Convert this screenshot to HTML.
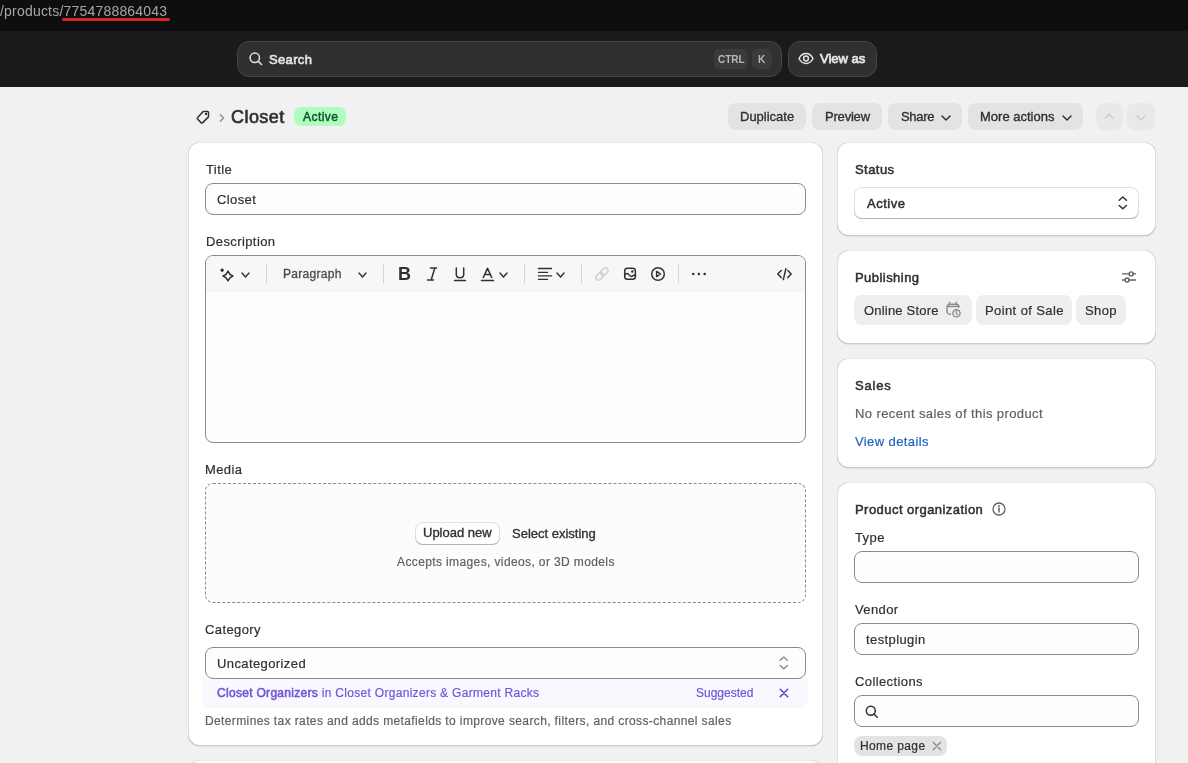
<!DOCTYPE html>
<html><head><meta charset="utf-8"><style>
*{box-sizing:border-box;margin:0;padding:0}
html,body{width:1188px;height:763px;overflow:hidden}
body{position:relative;background:#f1f1f1;font-family:"Liberation Sans",sans-serif;color:#303030;font-size:13px}
.a{position:absolute;white-space:nowrap}
svg{position:absolute;overflow:visible}
.r13{font-size:13px;line-height:16px;letter-spacing:.4px;-webkit-text-stroke:.2px currentColor}
.m13{font-size:13px;line-height:16px;-webkit-text-stroke:.35px currentColor}
.b13{font-size:13px;line-height:16px;font-weight:bold}
.r12{font-size:12px;line-height:16px;letter-spacing:.38px;-webkit-text-stroke:.2px currentColor}
.m12{font-size:12px;line-height:16px;-webkit-text-stroke:.3px currentColor;letter-spacing:.38px}
.b12{font-size:12px;line-height:16px;font-weight:bold}
.r14{font-size:14px;line-height:16px}
.b18{font-size:18px;line-height:20px;font-weight:bold}
.s13{font-size:13px;line-height:16px;-webkit-text-stroke:.5px currentColor;letter-spacing:.45px}
.s12{font-size:12px;line-height:16px;-webkit-text-stroke:.5px currentColor;letter-spacing:.45px}
.s18{font-size:18px;line-height:20px;-webkit-text-stroke:.65px currentColor;letter-spacing:.45px}
.b10{font-size:10px;line-height:16px;font-weight:bold}
.card{position:absolute;background:#fff;border-radius:12px;box-shadow:0 1px 1px 0 rgba(26,26,26,.08), inset 1px 0 0 0 rgba(0,0,0,.13), inset -1px 0 0 0 rgba(0,0,0,.13), inset 0 -1px 0 0 rgba(0,0,0,.2), inset 0 1px 0 0 rgba(0,0,0,.09)}
.inp{position:absolute;background:#fdfdfd;border:1px solid #8a8a8a;border-radius:8px}
.btn{position:absolute;background:#e3e3e3;border-radius:8px}
.chip{position:absolute;background:#eeeeee;border-radius:8px}
</style></head><body><div id="root" style="position:absolute;left:0;top:0;width:1188px;height:763px;overflow:hidden;will-change:transform">
<div class="a" style="left:0px;top:0px;width:1188px;height:31px;background:#0e0e10"></div>
<div class="a r14" style="left:0px;top:3px;color:#a6a6a6;letter-spacing:.2px">/products/7754788864043</div>
<div class="a" style="left:62px;top:18px;width:108px;height:3px;background:#d62424;border-radius:2px"></div>
<div class="a" style="left:0px;top:31px;width:1188px;height:56px;background:#1a1a1a"></div>
<div class="a" style="left:237px;top:41px;width:545px;height:36px;background:#303030;border:1px solid #454545;border-radius:12px"></div>
<svg style="left:249px;top:52px" width="14" height="14" viewBox="0 0 14 14"><circle cx="5.8" cy="5.8" r="4.7" fill="none" stroke="#e3e3e3" stroke-width="1.5"/><path d="M9.3 9.3l3.2 3.2" stroke="#e3e3e3" stroke-width="1.6" stroke-linecap="round"/></svg>
<div class="a s13" style="left:269px;top:52px;color:#e3e3e3;letter-spacing:.35px;-webkit-text-stroke:.65px #e3e3e3">Search</div>
<div class="a" style="left:714px;top:49px;width:34px;height:20px;background:#3b3b3b;border-radius:5px"></div>
<div class="a b10" style="left:718px;top:52px;color:#b8b8b8;">CTRL</div>
<div class="a" style="left:752px;top:49px;width:20px;height:20px;background:#3b3b3b;border-radius:5px"></div>
<div class="a b10" style="left:758px;top:52px;color:#b8b8b8;">K</div>
<div class="a" style="left:788px;top:41px;width:89px;height:36px;background:#303030;border:1px solid #454545;border-radius:12px"></div>
<svg style="left:798px;top:52px" width="16" height="13" viewBox="0 0 16 13"><path d="M1 6.5C2.8 3 5.1 1.5 8 1.5s5.2 1.5 7 5c-1.8 3.5-4.1 5-7 5s-5.2-1.5-7-5z" fill="none" stroke="#e3e3e3" stroke-width="1.5" stroke-linejoin="round"/><circle cx="8" cy="6.5" r="2.4" fill="none" stroke="#e3e3e3" stroke-width="1.5"/></svg>
<div class="a s13" style="left:820px;top:51px;color:#e3e3e3;letter-spacing:0;-webkit-text-stroke:.75px #e3e3e3">View as</div>
<svg style="left:196px;top:110px" width="14" height="14" viewBox="0 0 14 14"><path d="M7.6 1.5h3.9a1 1 0 0 1 1 1v3.9a1 1 0 0 1-.3.7l-5.5 5.5a1.2 1.2 0 0 1-1.7 0L1.7 9.3a1.2 1.2 0 0 1 0-1.7l5.2-5.8a1 1 0 0 1 .7-.3z" fill="none" stroke="#303030" stroke-width="1.5" stroke-linejoin="round"/><rect x="9" y="3" width="2" height="2" fill="#303030"/></svg>
<svg style="left:219px;top:114px" width="6" height="8" viewBox="0 0 6 8"><path d="M1.3 0.8L4.6 4 1.3 7.2" fill="none" stroke="#8a8a8a" stroke-width="1.3" stroke-linecap="round" stroke-linejoin="round"/></svg>
<div class="a s18" style="left:231px;top:107px;color:#303030;">Closet</div>
<div class="a" style="left:294px;top:107px;width:52px;height:19px;background:#affebf;border-radius:7px"></div>
<div class="a s12" style="left:303px;top:109px;color:#0d5a2c;">Active</div>
<div class="btn" style="left:728px;top:103px;width:78px;height:27px"></div>
<div class="a m13" style="left:740px;top:109px;">Duplicate</div>
<div class="btn" style="left:812px;top:103px;width:70px;height:27px"></div>
<div class="a m13" style="left:825px;top:109px;letter-spacing:-.2px">Preview</div>
<div class="btn" style="left:888px;top:103px;width:74px;height:27px"></div>
<div class="a m13" style="left:901px;top:109px;letter-spacing:-.3px">Share</div>
<svg style="left:941px;top:115px" width="10" height="6" viewBox="0 0 10 6"><path d="M1 1l4.0 4L9 1" fill="none" stroke="#303030" stroke-width="1.5" stroke-linecap="round" stroke-linejoin="round"/></svg>
<div class="btn" style="left:968px;top:103px;width:115px;height:27px"></div>
<div class="a m13" style="left:980px;top:109px;">More actions</div>
<svg style="left:1062px;top:115px" width="10" height="6" viewBox="0 0 10 6"><path d="M1 1l4.0 4L9 1" fill="none" stroke="#303030" stroke-width="1.5" stroke-linecap="round" stroke-linejoin="round"/></svg>
<div class="btn" style="left:1096px;top:103px;width:27px;height:27px;background:#e9e9e9"></div>
<svg style="left:1104px;top:113px" width="10" height="6" viewBox="0 0 10 6"><path d="M1 5l4.0 -4L9 5" fill="none" stroke="#cccccc" stroke-width="1.5" stroke-linecap="round" stroke-linejoin="round"/></svg>
<div class="btn" style="left:1127px;top:103px;width:28px;height:27px;background:#e9e9e9"></div>
<svg style="left:1136px;top:115px" width="10" height="6" viewBox="0 0 10 6"><path d="M1 1l4.0 4L9 1" fill="none" stroke="#cccccc" stroke-width="1.5" stroke-linecap="round" stroke-linejoin="round"/></svg>
<div class="card" style="left:188px;top:142px;width:635px;height:604px"></div>
<div class="card" style="left:188px;top:760px;width:635px;height:100px"></div>
<div class="a r13" style="left:206px;top:162px;">Title</div>
<div class="inp" style="left:205px;top:183px;width:601px;height:32px"></div>
<div class="a r13" style="left:217px;top:192px;">Closet</div>
<div class="a r13" style="left:206px;top:234px;">Description</div>
<div class="inp" style="left:205px;top:255px;width:601px;height:188px;overflow:hidden"><div style="position:absolute;left:0;top:0;right:0;height:36px;background:#f7f7f7"></div></div>
<svg style="left:216px;top:264px" width="20" height="20" viewBox="0 0 20 20"><rect x="4.7" y="4.7" width="2.9" height="2.9" rx=".4" transform="rotate(45 6.15 6.15)" fill="#303030"/><path d="M12 7.2Q13.3 10.7 16.9 12 13.3 13.3 12 16.8 10.7 13.3 7.1 12 10.7 10.7 12 7.2z" fill="none" stroke="#303030" stroke-width="1.6" stroke-linejoin="round"/></svg>
<svg style="left:241px;top:272px" width="9" height="6" viewBox="0 0 9 6"><path d="M1 1l3.5 4L8 1" fill="none" stroke="#303030" stroke-width="1.4" stroke-linecap="round" stroke-linejoin="round"/></svg>
<div class="a" style="left:266px;top:264px;width:1px;height:19px;background:#d4d4d4"></div>
<div class="a m12" style="left:283px;top:266px;color:#4a4a4a;letter-spacing:.3px">Paragraph</div>
<svg style="left:358px;top:272px" width="9" height="6" viewBox="0 0 9 6"><path d="M1 1l3.5 4L8 1" fill="none" stroke="#303030" stroke-width="1.4" stroke-linecap="round" stroke-linejoin="round"/></svg>
<div class="a" style="left:383px;top:264px;width:1px;height:19px;background:#d4d4d4"></div>
<div class="a b18" style="left:398px;top:264px;">B</div>
<svg style="left:426px;top:267px" width="12" height="14" viewBox="0 0 12 14"><path d="M4.5 1h6M1.5 13h6M8.8 1L5.2 13" fill="none" stroke="#303030" stroke-width="1.5" stroke-linecap="round"/></svg>
<svg style="left:453px;top:267px" width="14" height="15" viewBox="0 0 14 15"><path d="M3.3 1v6.3c0 2.2 1.3 3.5 3.7 3.5s3.7-1.3 3.7-3.5V1" fill="none" stroke="#303030" stroke-width="1.5" stroke-linecap="round"/><path d="M1.5 13.6h11" stroke="#303030" stroke-width="1.5" stroke-linecap="round"/></svg>
<svg style="left:480px;top:267px" width="15" height="15" viewBox="0 0 15 15"><path d="M3.3 10.5L7.5 1.2l4.2 9.3M4.7 7.6h5.6" fill="none" stroke="#303030" stroke-width="1.5" stroke-linecap="round" stroke-linejoin="round"/><path d="M1.5 13.6h12" stroke="#303030" stroke-width="1.5" stroke-linecap="round"/></svg>
<svg style="left:499px;top:272px" width="9" height="6" viewBox="0 0 9 6"><path d="M1 1l3.5 4L8 1" fill="none" stroke="#303030" stroke-width="1.4" stroke-linecap="round" stroke-linejoin="round"/></svg>
<div class="a" style="left:524px;top:264px;width:1px;height:19px;background:#d4d4d4"></div>
<svg style="left:537px;top:267px" width="16" height="14" viewBox="0 0 16 14"><path d="M1.5 1.5h13M1.5 5.4h9M1.5 8.9h13M1.5 12.4h9" stroke="#303030" stroke-width="1.4" stroke-linecap="round"/></svg>
<svg style="left:556px;top:272px" width="9" height="6" viewBox="0 0 9 6"><path d="M1 1l3.5 4L8 1" fill="none" stroke="#303030" stroke-width="1.4" stroke-linecap="round" stroke-linejoin="round"/></svg>
<div class="a" style="left:581px;top:264px;width:1px;height:19px;background:#d4d4d4"></div>
<svg style="left:594px;top:266px" width="16" height="16" viewBox="0 0 16 16"><g transform="rotate(-45 8 8)" fill="none" stroke="#d0d0d0" stroke-width="1.5"><rect x="0.6" y="5.3" width="8.4" height="5.4" rx="2.7"/><rect x="7" y="5.3" width="8.4" height="5.4" rx="2.7"/></g></svg>
<svg style="left:623px;top:267px" width="14" height="14" viewBox="0 0 14 14"><rect x="1.7" y="1.3" width="10.7" height="10.9" rx="2.8" fill="none" stroke="#303030" stroke-width="1.5"/><circle cx="9.3" cy="4.5" r="1.2" fill="#303030"/><path d="M1.6 8.3C2.8 6.2 4.4 6 5.8 7.6C7.2 9.4 8.5 10.3 10.1 8.5C11 7.6 11.7 8 12.4 9" fill="none" stroke="#303030" stroke-width="1.4" stroke-linejoin="round"/></svg>
<svg style="left:650px;top:266px" width="16" height="16" viewBox="0 0 16 16"><circle cx="8" cy="8" r="6.3" fill="none" stroke="#303030" stroke-width="1.5"/><path d="M6.6 5.4v5.2l4-2.6z" fill="none" stroke="#303030" stroke-width="1.4" stroke-linejoin="round"/></svg>
<div class="a" style="left:678px;top:264px;width:1px;height:19px;background:#d4d4d4"></div>
<svg style="left:691px;top:272px" width="16" height="4" viewBox="0 0 16 4"><circle cx="2.3" cy="2" r="1.3" fill="#303030"/><circle cx="7.9" cy="2" r="1.3" fill="#303030"/><circle cx="13.7" cy="2" r="1.3" fill="#303030"/></svg>
<svg style="left:776px;top:268px" width="17" height="13" viewBox="0 0 17 13"><path d="M5.2 2.6L1.8 6.1l3.4 3.5M11.8 2.6l3.4 3.5-3.4 3.5M9.9 0.8L7.3 11.6" fill="none" stroke="#303030" stroke-width="1.5" stroke-linecap="round" stroke-linejoin="round"/></svg>
<div class="a r13" style="left:205px;top:462px;">Media</div>
<div class="a" style="left:205px;top:483px;width:601px;height:120px;border:1px dashed #8a8a8a;border-radius:8px;background:#fcfcfc"></div>
<div class="a" style="left:415px;top:522px;width:85px;height:23px;background:#fff;border-radius:8px;box-shadow:inset 0 -1px 0 0 #b5b5b5, inset 0 0 0 1px rgba(0,0,0,.12)"></div>
<div class="a m13" style="left:423px;top:525px;">Upload new</div>
<div class="a m13" style="left:512px;top:526px;">Select existing</div>
<div class="a r12" style="left:397px;top:554px;color:#616161;">Accepts images, videos, or 3D models</div>
<div class="a r13" style="left:205px;top:622px;">Category</div>
<div class="a" style="left:202px;top:678px;width:606px;height:30px;background:#f9f8ff;border-radius:0 0 8px 8px"></div>
<div class="inp" style="left:205px;top:647px;width:601px;height:32px"></div>
<div class="a r13" style="left:217px;top:656px;">Uncategorized</div>
<svg style="left:779px;top:656px" width="10" height="14" viewBox="0 0 10 14"><path d="M1.2 4.3L4.8 1l3.6 3.3M1.2 9.5l3.6 3.3 3.6-3.3" fill="none" stroke="#8a8a8a" stroke-width="1.4" stroke-linecap="round" stroke-linejoin="round"/></svg>
<div class="a r12" style="left:217px;top:685px;color:#7254d8;letter-spacing:.3px"><span style="-webkit-text-stroke:.55px currentColor">Closet Organizers</span> in Closet Organizers &amp; Garment Racks</div>
<div class="a r12" style="left:696px;top:685px;color:#7254d8;letter-spacing:0">Suggested</div>
<svg style="left:779px;top:688px" width="10" height="10" viewBox="0 0 10 10"><path d="M1.2 1.2l7.5 7.5M8.7 1.2L1.2 8.7" stroke="#5643c8" stroke-width="1.5" stroke-linecap="round"/></svg>
<div class="a r12" style="left:205px;top:713px;color:#616161;">Determines tax rates and adds metafields to improve search, filters, and cross-channel sales</div>
<div class="card" style="left:837px;top:142px;width:319px;height:94px"></div>
<div class="a s13" style="left:855px;top:162px;">Status</div>
<div class="a" style="left:854px;top:187px;width:285px;height:32px;background:#fff;border-radius:8px;box-shadow:inset 0 -1px 0 0 #b5b5b5, inset 0 0 0 1px rgba(0,0,0,.12)"></div>
<div class="a s13" style="left:867px;top:196px;letter-spacing:.5px">Active</div>
<svg style="left:1118px;top:196px" width="10" height="14" viewBox="0 0 10 14"><path d="M1.2 4.3L4.8 1l3.6 3.3M1.2 9.5l3.6 3.3 3.6-3.3" fill="none" stroke="#303030" stroke-width="1.5" stroke-linecap="round" stroke-linejoin="round"/></svg>
<div class="card" style="left:837px;top:250px;width:319px;height:94px"></div>
<div class="a s13" style="left:855px;top:270px;">Publishing</div>
<svg style="left:1121px;top:269px" width="16" height="15" viewBox="0 0 16 15"><path d="M1.5 4.9h6.8M12 4.9h2.5M1.5 11h2.7M8 11h6.5" stroke="#616161" stroke-width="1.4" stroke-linecap="round"/><circle cx="10.2" cy="4.9" r="2" fill="none" stroke="#616161" stroke-width="1.4"/><circle cx="6.1" cy="11" r="2" fill="none" stroke="#616161" stroke-width="1.4"/></svg>
<div class="chip" style="left:854px;top:295px;width:118px;height:30px"></div>
<div class="a r13" style="left:864px;top:303px;letter-spacing:.2px">Online Store</div>
<svg style="left:945px;top:301px" width="17" height="17" viewBox="0 0 17 17"><path d="M5.5 13.2h-.7a2.8 2.8 0 0 1-2.8-2.8V6a2.8 2.8 0 0 1 2.8-2.8h6.4A2.8 2.8 0 0 1 14 6v.3M2.2 5.5h11.6M4.5 1.3v2.2M11.3 1.3v2.2" fill="none" stroke="#8a8a8a" stroke-width="1.4" stroke-linecap="round"/><circle cx="11.5" cy="12.3" r="3.6" fill="#eeeeee" stroke="#8a8a8a" stroke-width="1.4"/><path d="M11.3 10.4v2.1l1.2 1" fill="none" stroke="#8a8a8a" stroke-width="1.2" stroke-linecap="round"/></svg>
<div class="chip" style="left:976px;top:295px;width:96px;height:30px"></div>
<div class="a r13" style="left:985px;top:303px;">Point of Sale</div>
<div class="chip" style="left:1076px;top:295px;width:50px;height:30px"></div>
<div class="a r13" style="left:1085px;top:303px;">Shop</div>
<div class="card" style="left:837px;top:358px;width:319px;height:110px"></div>
<div class="a s13" style="left:855px;top:378px;letter-spacing:.8px">Sales</div>
<div class="a r13" style="left:855px;top:406px;color:#616161;">No recent sales of this product</div>
<div class="a r13" style="left:855px;top:434px;color:#2062c4;">View details</div>
<div class="card" style="left:837px;top:482px;width:319px;height:400px"></div>
<div class="a s13" style="left:855px;top:502px;">Product organization</div>
<svg style="left:991px;top:502px" width="16" height="16" viewBox="0 0 16 16"><circle cx="8" cy="7" r="6" fill="none" stroke="#616161" stroke-width="1.3"/><path d="M8 6v4" stroke="#616161" stroke-width="1.5" stroke-linecap="round"/><circle cx="8" cy="4" r=".9" fill="#616161"/></svg>
<div class="a r13" style="left:855px;top:530px;">Type</div>
<div class="inp" style="left:854px;top:551px;width:285px;height:32px"></div>
<div class="a r13" style="left:855px;top:602px;">Vendor</div>
<div class="inp" style="left:854px;top:623px;width:285px;height:32px"></div>
<div class="a r13" style="left:866px;top:632px;">testplugin</div>
<div class="a r13" style="left:855px;top:674px;">Collections</div>
<div class="inp" style="left:854px;top:695px;width:285px;height:32px"></div>
<svg style="left:865px;top:705px" width="14" height="14" viewBox="0 0 14 14"><circle cx="5.8" cy="5.8" r="4.5" fill="none" stroke="#303030" stroke-width="1.5"/><path d="M9.2 9.2l3 3" stroke="#303030" stroke-width="1.5" stroke-linecap="round"/></svg>
<div class="a" style="left:854px;top:736px;width:93px;height:20px;background:#e3e3e3;border-radius:8px"></div>
<div class="a r12" style="left:860px;top:738px;">Home page</div>
<svg style="left:932px;top:741px" width="10" height="10" viewBox="0 0 10 10"><path d="M1.2 1.2l7.5 7.5M8.7 1.2L1.2 8.7" stroke="#8a8a8a" stroke-width="1.3" stroke-linecap="round"/></svg>
</div></body></html>
